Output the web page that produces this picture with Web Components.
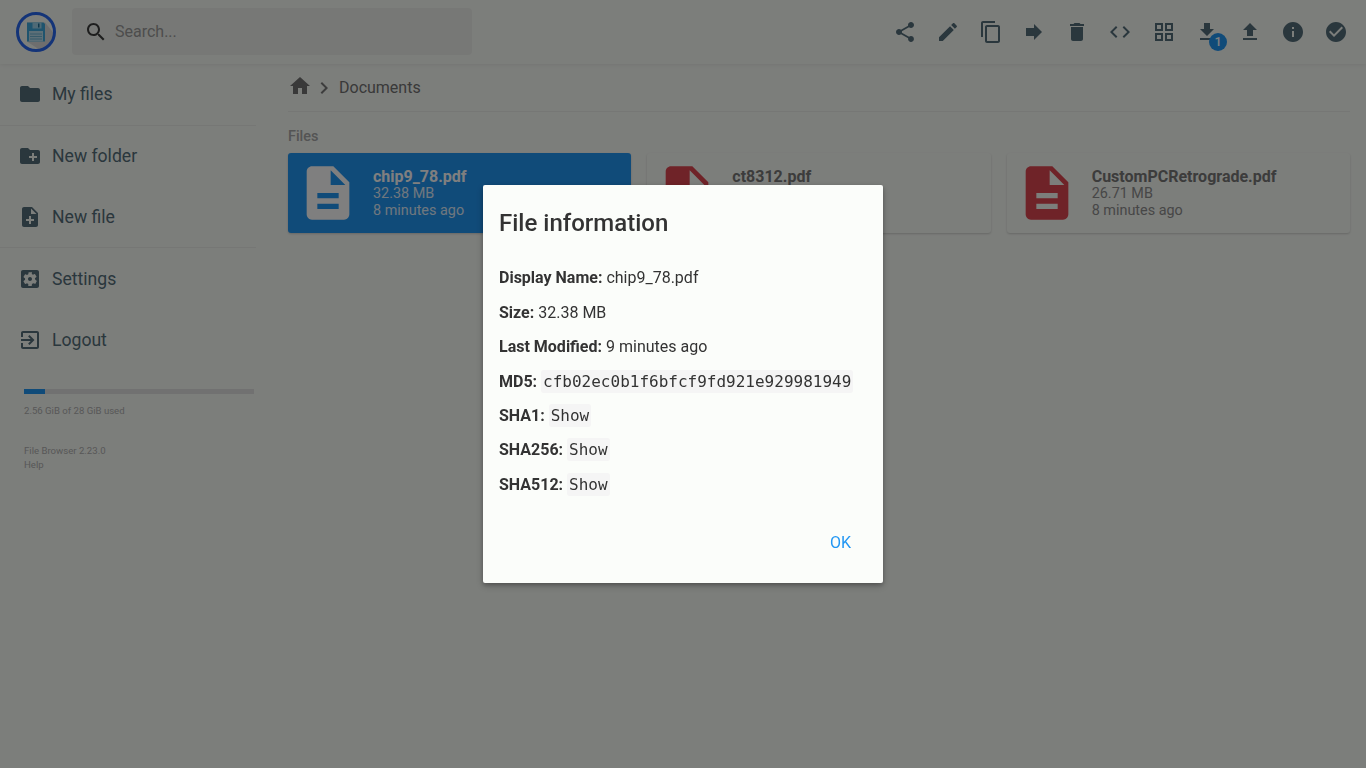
<!DOCTYPE html>
<html lang="en">
<head>
<meta charset="utf-8">
<title>File Browser</title>
<style>
    html, body { margin: 0; height: 100%; }
    body {
        background: #f9fcf7;
        font-family: Roboto, "Liberation Sans", sans-serif;
        font-size: 16px;
        color: #333;
        overflow: hidden;
    }
</style>
</head>
<body>
<fb-app>
    <fb-header slot="header"></fb-header>
    <fb-sidebar slot="nav"></fb-sidebar>
    <fb-listing slot="main"></fb-listing>
</fb-app>
<fb-dialog></fb-dialog>

<script>
const ICONS = {
    share: 'M18 16.08c-.76 0-1.44.3-1.96.77L8.91 12.7c.05-.23.09-.46.09-.7s-.04-.47-.09-.7l7.05-4.11c.54.5 1.25.81 2.04.81 1.66 0 3-1.34 3-3s-1.34-3-3-3-3 1.34-3 3c0 .24.04.47.09.7L8.04 9.81C7.5 9.31 6.79 9 6 9c-1.66 0-3 1.34-3 3s1.34 3 3 3c.79 0 1.5-.31 2.04-.81l7.12 4.16c-.05.21-.08.43-.08.65 0 1.61 1.31 2.92 2.92 2.92 1.61 0 2.92-1.31 2.92-2.92s-1.31-2.92-2.92-2.92z',
    edit: 'M3 17.25V21h3.75L17.81 9.94l-3.75-3.75L3 17.25zM20.71 7.04c.39-.39.39-1.02 0-1.41l-2.34-2.34c-.39-.39-1.02-.39-1.41 0l-1.83 1.83 3.75 3.75 1.83-1.83z',
    copy: 'M16 1H4c-1.1 0-2 .9-2 2v14h2V3h12V1zm3 4H8c-1.1 0-2 .9-2 2v14c0 1.1.9 2 2 2h11c1.1 0 2-.9 2-2V7c0-1.1-.9-2-2-2zm0 16H8V7h11v14z',
    forward: 'M12 8V4l8 8-8 8v-4H4V8z',
    trash: 'M6 19c0 1.1.9 2 2 2h8c1.1 0 2-.9 2-2V7H6v12zM19 4h-3.5l-1-1h-5l-1 1H5v2h14V4z',
    code: 'M9.4 16.6L4.8 12l4.6-4.6L8 6l-6 6 6 6 1.4-1.4zm5.2 0l4.6-4.6-4.6-4.6L16 6l6 6-6 6-1.4-1.4z',
    grid: 'M3 3v8h8V3H3zm6 6H5V5h4v4zm-6 4v8h8v-8H3zm6 6H5v-4h4v4zm4-16v8h8V3h-8zm6 6h-4V5h4v4zm-6 4v8h8v-8h-8zm6 6h-4v-4h4v4z',
    download: 'M19 9h-4V3H9v6H5l7 7 7-7zM5 18v2h14v-2H5z',
    upload: 'M9 16h6v-6h4l-7-7-7 7h4zm-4 2h14v2H5z',
    info: 'M12 2C6.48 2 2 6.48 2 12s4.48 10 10 10 10-4.48 10-10S17.52 2 12 2zm1 15h-2v-6h2v6zm0-8h-2V7h2v2z',
    check: 'M12 2C6.48 2 2 6.48 2 12s4.48 10 10 10 10-4.48 10-10S17.52 2 12 2zm-2 15l-5-5 1.41-1.41L10 14.17l7.59-7.59L19 8l-9 9z',
    search: 'M15.5 14h-.79l-.28-.27C15.41 12.59 16 11.11 16 9.5 16 5.91 13.09 3 9.5 3S3 5.91 3 9.5 5.91 16 9.5 16c1.61 0 3.09-.59 4.23-1.57l.27.28v.79l5 4.99L20.49 19l-4.99-5zm-6 0C7.01 14 5 11.99 5 9.5S7.01 5 9.5 5 14 7.01 14 9.5 11.99 14 9.5 14z',
    home: 'M10 20v-6h4v6h5v-8h3L12 3 2 12h3v8z',
    chevron: 'M10 6L8.59 7.41 13.17 12l-4.58 4.59L10 18l6-6z',
    folder: 'M10 4H4c-1.1 0-1.99.9-1.99 2L2 18c0 1.1.9 2 2 2h16c1.1 0 2-.9 2-2V8c0-1.1-.9-2-2-2h-8l-2-2z',
    newFolder: 'M20 6h-8l-2-2H4c-1.11 0-1.99.89-1.99 2L2 18c0 1.11.89 2 2 2h16c1.11 0 2-.89 2-2V8c0-1.11-.89-2-2-2zm-1 8h-3v3h-2v-3h-3v-2h3V9h2v3h3v2z',
    newFile: 'M14 2H6c-1.1 0-1.99.9-1.99 2L4 20c0 1.1.89 2 1.99 2H18c1.1 0 2-.9 2-2V8l-6-6zm2 14h-3v3h-2v-3H8v-2h3v-3h2v3h3v2zm-3-7V3.5L18.5 9H13z',
    settings: 'M12 10c-1.1 0-2 .9-2 2s.9 2 2 2 2-.9 2-2-.9-2-2-2zm7-7H5c-1.11 0-2 .9-2 2v14c0 1.1.89 2 2 2h14c1.11 0 2-.9 2-2V5c0-1.1-.89-2-2-2zm-1.75 9c0 .23-.02.46-.05.68l1.48 1.16c.13.11.17.3.08.45l-1.4 2.42c-.09.15-.27.21-.43.15l-1.74-.7c-.36.28-.76.51-1.18.69l-.26 1.85c-.03.17-.18.3-.35.3h-2.8c-.17 0-.32-.13-.35-.3L10.3 17c-.43-.18-.82-.41-1.18-.69l-1.74.7c-.16.06-.34 0-.43-.15l-1.4-2.42c-.09-.15-.05-.34.08-.45l1.48-1.16c-.03-.22-.05-.45-.05-.68 0-.23.02-.46.05-.68l-1.48-1.16c-.13-.11-.17-.3-.08-.45l1.4-2.42c.09-.15.27-.21.43-.15l1.74.7c.36-.28.76-.51 1.18-.69l.26-1.85c.03-.17.18-.3.35-.3h2.8c.17 0 .32.13.35.3L13.7 7c.43.18.82.41 1.18.69l1.74-.7c.16-.06.34 0 .43.15l1.4 2.42c.09.15.05.34-.08.45l-1.48 1.16c.03.22.05.45.05.68z',
    logout: 'M10.09 15.59L11.5 17l5-5-5-5-1.41 1.41L12.67 11H3v2h9.67l-2.58 2.59zM19 3H5c-1.11 0-2 .9-2 2v4h2V5h14v14H5v-4H3v4c0 1.1.89 2 2 2h14c1.1 0 2-.9 2-2V5c0-1.1-.9-2-2-2z',
    file: 'M14 2H6c-1.1 0-1.99.9-1.99 2L4 20c0 1.1.89 2 1.99 2H18c1.1 0 2-.9 2-2V8l-6-6zm2 16H8v-2h8v2zm0-4H8v-2h8v2zm-3-5V3.5L18.5 9H13z'
};

const icon = (name, size = 24) =>
    `<svg width="${size}" height="${size}" viewBox="0 0 24 24" fill="currentColor" aria-hidden="true"><path d="${ICONS[name]}"/></svg>`;

class FbApp extends HTMLElement {
    constructor() {
        super();
        this.attachShadow({ mode: 'open' });
        this.shadowRoot.innerHTML = `
            <style>
                :host {
                    display: grid;
                    grid-template-columns: 256px 1fr;
                    grid-template-rows: 64px 1fr;
                    height: 768px;
                }
                ::slotted([slot="header"]) { grid-column: 1 / 3; }
            </style>
            <slot name="header"></slot>
            <slot name="nav"></slot>
            <slot name="main"></slot>
        `;
    }
}

class FbHeader extends HTMLElement {
    constructor() {
        super();
        this.attachShadow({ mode: 'open' });
        const actions = ['share', 'edit', 'copy', 'forward', 'trash', 'code', 'grid', 'download', 'upload', 'info', 'check'];
        this.shadowRoot.innerHTML = `
            <style>
                :host {
                    display: flex;
                    align-items: center;
                    height: 64px;
                    box-sizing: border-box;
                    padding: 0 8px 0 16px;
                    background: #f9fcf7;
                    box-shadow: 0 0 5px rgba(0, 0, 0, 0.1);
                    position: relative;
                    z-index: 1;
                }
                .logo { display: block; width: 40px; height: 40px; margin-right: 16px; }
                .search {
                    display: flex;
                    align-items: center;
                    width: 400px;
                    height: 47px;
                    box-sizing: border-box;
                    padding: 0 12px;
                    gap: 7px;
                    border-radius: 4px;
                    background: rgba(100, 100, 100, 0.07);
                    color: #3d3d3d;
                    margin-top: -1px;
                }
                .search span { color: #9a9a9a; font-size: 16px; }
                .search svg { display: block; }
                .actions { display: flex; margin-left: auto; color: #546e7a; }
                .action { position: relative; display: block; padding: 9.6px; line-height: 0; }
                .badge {
                    position: absolute;
                    left: 24px;
                    top: 22.5px;
                    width: 18px;
                    height: 18px;
                    border-radius: 50%;
                    background: #2196f3;
                    color: #fff;
                    font-size: 12.8px;
                    font-weight: 500;
                    line-height: 18px;
                    text-align: center;
                }
            </style>
            <svg class="logo" viewBox="0 0 40 40" aria-hidden="true">
                <circle cx="20" cy="20" r="18.5" fill="#f9fcf7"/>
                <path d="M11 10.5 L29 10.5 L38.4 22 A18.5 18.5 0 0 1 24 38 L11 29.5 Z" fill="#dcdcdc"/>
                <circle cx="20" cy="20" r="18.5" fill="none" stroke="#2868f0" stroke-width="3"/>
                <path d="M11 10.5h16.5l1.5 1.5v17.5h-18z" fill="#3fa9dc"/>
                <path d="M16.5 10.5h9v6h-9z" fill="#9ed4ec"/>
                <path d="M22 11.5h1.5v4H22z" fill="#1f6f96"/>
                <path d="M13 19h14v10.5H13z" fill="#b8dfee"/>
                <path d="M14 21.5h12v1H14zM14 24h12v1H14zM14 26.5h12v1H14z" fill="#6fb4d2"/>
            </svg>
            <div class="search">${icon('search')}<span>Search...</span></div>
            <div class="actions">
                ${actions.map(a => `<div class="action">${icon(a)}${a === 'download' ? '<span class="badge">1</span>' : ''}</div>`).join('')}
            </div>
        `;
    }
}

class FbNavItem extends HTMLElement {
    constructor() {
        super();
        this.attachShadow({ mode: 'open' });
    }

    connectedCallback() {
        this.shadowRoot.innerHTML = `
            <style>
                :host {
                    display: flex;
                    align-items: center;
                    gap: 10px;
                    height: 60.8px;
                    padding-left: 18px;
                    color: #546e7a;
                    font-size: 17.6px;
                }
                svg { display: block; }
            </style>
            ${icon(this.getAttribute('icon'))}
            <slot></slot>
        `;
    }
}

class FbSidebar extends HTMLElement {
    constructor() {
        super();
        this.attachShadow({ mode: 'open' });
        this.shadowRoot.innerHTML = `
            <style>
                :host { display: block; }
                .rule { border-top: 1px solid rgba(0, 0, 0, 0.05); }
                .usage { padding: 19px 2px 0 24px; font-size: 9.6px; color: #b0b0b0; }
                .bar { width: 230px; height: 5px; background: #e2e2e2; }
                .fill { width: 21px; height: 100%; background: #2196f3; }
                .usage p { margin: 11px 0 0; line-height: 12px; }
                .credits { padding: 27px 0 0 24px; font-size: 9.6px; line-height: 14px; color: #b0b0b0; }
            </style>
            <fb-nav-item icon="folder">My files</fb-nav-item>
            <div class="rule"></div>
            <fb-nav-item icon="newFolder">New folder</fb-nav-item>
            <fb-nav-item icon="newFile">New file</fb-nav-item>
            <div class="rule"></div>
            <fb-nav-item icon="settings">Settings</fb-nav-item>
            <fb-nav-item icon="logout">Logout</fb-nav-item>
            <div class="usage">
                <div class="bar"><div class="fill"></div></div>
                <p>2.56 GiB of 28 GiB used</p>
            </div>
            <div class="credits">
                <div>File Browser 2.23.0</div>
                <div>Help</div>
            </div>
        `;
    }
}

class FbCard extends HTMLElement {
    constructor() {
        super();
        this.attachShadow({ mode: 'open' });
    }

    connectedCallback() {
        this.shadowRoot.innerHTML = `
            <style>
                :host {
                    display: flex;
                    align-items: center;
                    height: 80px;
                    box-sizing: border-box;
                    padding-left: 8px;
                    border-radius: 3px;
                    background: #f9fcf7;
                    color: #8e8e8e;
                    box-shadow: rgba(0, 0, 0, 0.06) 0 1px 3px, rgba(0, 0, 0, 0.12) 0 1px 2px;
                }
                :host([selected]) { background: #2196f3; color: #fff; }
                .icon { color: #df4650; flex: none; line-height: 0; margin-right: 13px; }
                :host([selected]) .icon { color: #fff; }
                .name { font-size: 16px; font-weight: 700; line-height: 17px; color: #787878; }
                :host([selected]) .name { color: #fff; }
                .meta { font-size: 14.4px; line-height: 17px; min-height: 17px; }
                :host([selected]) .meta { opacity: 0.85; }
            </style>
            <div class="icon">${icon('file', 64)}</div>
            <div>
                <div class="name">${this.getAttribute('name')}</div>
                <div class="meta">${this.getAttribute('size') || ''}</div>
                <div class="meta">${this.getAttribute('modified') || ''}</div>
            </div>
        `;
    }
}

class FbListing extends HTMLElement {
    constructor() {
        super();
        this.attachShadow({ mode: 'open' });
        this.shadowRoot.innerHTML = `
            <style>
                :host { display: block; padding: 0 16px 0 32px; }
                .crumbs {
                    display: flex;
                    align-items: center;
                    height: 47px;
                    border-bottom: 1px solid rgba(0, 0, 0, 0.05);
                    color: #737373;
                    font-size: 16px;
                }
                .crumbs svg { display: block; }
                .home { margin-top: -3px; }
                .chev { margin: 0 3px 0 0; color: #7a7a7a; }
                h2 {
                    margin: 16px 0 8px;
                    font-size: 14.4px;
                    font-weight: 500;
                    line-height: 17px;
                    color: #a8a8a8;
                }
                .grid { display: grid; grid-template-columns: repeat(3, 1fr); column-gap: 16px; }
            </style>
            <div class="crumbs">
                <span class="home">${icon('home')}</span>
                <span class="chev">${icon('chevron')}</span>
                <span>Documents</span>
            </div>
            <h2>Files</h2>
            <div class="grid">
                <fb-card selected name="chip9_78.pdf" size="32.38 MB" modified="8 minutes ago"></fb-card>
                <fb-card name="ct8312.pdf"></fb-card>
                <fb-card name="CustomPCRetrograde.pdf" size="26.71 MB" modified="8 minutes ago"></fb-card>
            </div>
        `;
    }
}

class FbDialog extends HTMLElement {
    constructor() {
        super();
        this.attachShadow({ mode: 'open' });
        const row = (label, value) => `<p><b>${label}:</b> ${value}</p>`;
        this.shadowRoot.innerHTML = `
            <style>
                :host {
                    position: fixed;
                    inset: 0;
                    z-index: 10;
                    display: flex;
                    align-items: center;
                    justify-content: center;
                    background: rgba(0, 0, 0, 0.5);
                }
                .card {
                    width: 400px;
                    height: 398px;
                    box-sizing: border-box;
                    display: flex;
                    flex-direction: column;
                    background: #fbfdfa;
                    border-radius: 2px;
                    box-shadow: rgba(0, 0, 0, 0.19) 0 3px 8px, rgba(0, 0, 0, 0.23) 0 2px 4px;
                    color: #333;
                }
                h2 {
                    margin: 0;
                    padding: 24px 16px 16px;
                    font-size: 24px;
                    font-weight: 500;
                    line-height: 28px;
                }
                .body { padding: 16.3px 16px 0; flex: 1; }
                p { margin: 0 0 16px; line-height: 18.4px; font-size: 16px; }
                b { font-weight: 700; }
                code {
                    font-family: "DejaVu Sans Mono", monospace;
                    font-size: 16px;
                    background: #f5f5f5;
                    border-radius: 3px;
                    padding: 2px;
                }
                .foot { display: flex; justify-content: flex-end; padding: 0 16px 22px; }
                .ok { padding: 9px 16px; line-height: 19px; font-size: 16px; color: #2196f3; }
            </style>
            <div class="card">
                <h2>File information</h2>
                <div class="body">
                    ${row('Display Name', 'chip9_78.pdf')}
                    ${row('Size', '32.38 MB')}
                    ${row('Last Modified', '9 minutes ago')}
                    ${row('MD5', '<code>cfb02ec0b1f6bfcf9fd921e929981949</code>')}
                    ${row('SHA1', '<code>Show</code>')}
                    ${row('SHA256', '<code>Show</code>')}
                    ${row('SHA512', '<code>Show</code>')}
                </div>
                <div class="foot"><div class="ok">OK</div></div>
            </div>
        `;
    }
}

customElements.define('fb-app', FbApp);
customElements.define('fb-header', FbHeader);
customElements.define('fb-nav-item', FbNavItem);
customElements.define('fb-sidebar', FbSidebar);
customElements.define('fb-card', FbCard);
customElements.define('fb-listing', FbListing);
customElements.define('fb-dialog', FbDialog);
</script>
</body>
</html>
